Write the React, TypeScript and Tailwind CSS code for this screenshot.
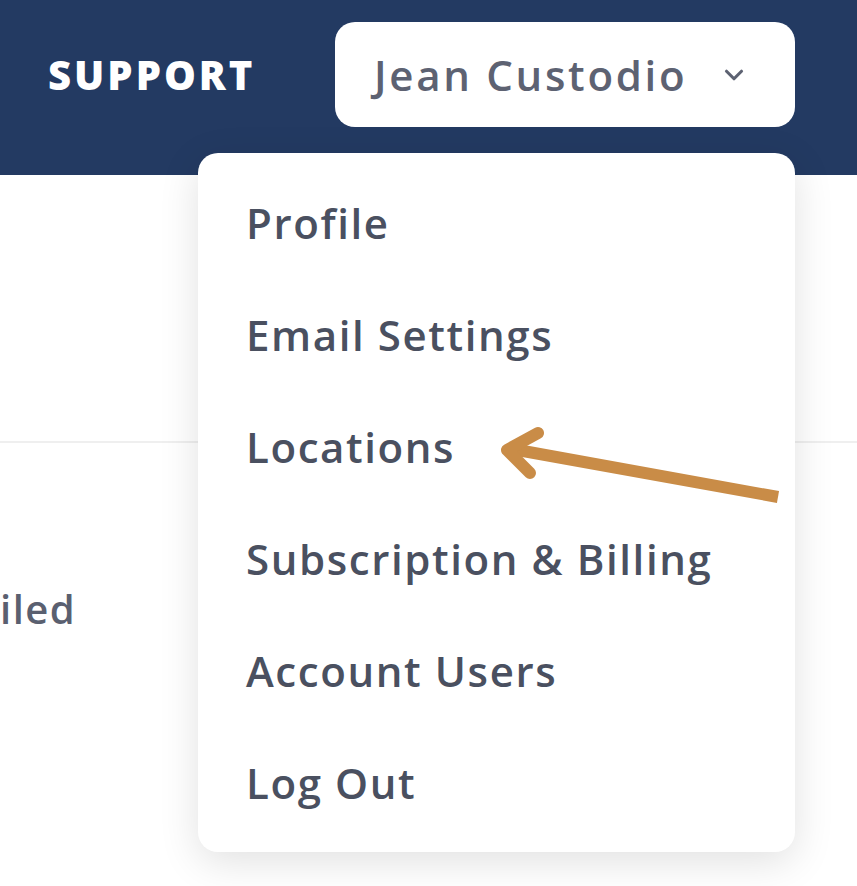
import { ChevronDown } from "lucide-react";

const menuItems = [
  "Profile",
  "Email Settings",
  "Locations",
  "Subscription & Billing",
  "Account Users",
  "Log Out",
];

export default function App() {
  return (
    <div
      className="relative w-[857px] h-[886px] overflow-hidden bg-white"
      style={{ fontFamily: '"Open Sans", "Noto Sans", sans-serif' }}
    >
      {/* Top bar */}
      <header className="h-[175px] bg-[#233a62] pt-[22px]">
        <div className="flex items-center h-[105px] pl-[48px] pr-[62px]">
          <span className="text-white font-extrabold text-[40px] tracking-[3px]">SUPPORT</span>
          <button
            type="button"
            className="ml-auto flex items-center w-[460px] h-[105px] rounded-[20px] bg-white pl-[39px] pr-[46px]"
          >
            <span className="text-[#5d6272] font-semibold text-[42px] tracking-[2.7px]">Jean Custodio</span>
            <ChevronDown className="ml-auto h-[30px] w-[30px] text-[#5d6272]" strokeWidth={2.5} />
          </button>
        </div>
      </header>

      {/* Page content behind the menu */}
      <main className="flex flex-col">
        <div className="h-[266px]" />
        <div className="border-t-2 border-[#efefef]" />
        <div className="flex pt-[136px]">
          <span className="whitespace-nowrap text-[#5a6070] font-semibold text-[40px] tracking-[1.5px]">iled</span>
        </div>
      </main>

      {/* Dropdown */}
      <div className="absolute top-[153px] left-[198px] w-[597px] h-[699px] rounded-[20px] bg-white shadow-[0_10px_40px_rgba(0,0,0,0.12)] flex flex-col pt-[13px]">
        {menuItems.map((item) => (
          <div key={item} className="h-[112px] flex items-center pl-[48px]">
            <span className="text-[#4a5060] font-semibold text-[42px] tracking-[1.6px]">{item}</span>
          </div>
        ))}
      </div>

      {/* Annotation arrow */}
      <svg
        className="absolute left-0 top-0 pointer-events-none"
        width="857"
        height="886"
        viewBox="0 0 857 886"
      >
        <g stroke="#c98c47" strokeWidth="12" fill="none" strokeLinecap="round" strokeLinejoin="round">
          <line x1="778" y1="497" x2="512" y2="449" strokeLinecap="butt" />
          <polyline points="538,433 507,450 530,473" />
        </g>
      </svg>
    </div>
  );
}
